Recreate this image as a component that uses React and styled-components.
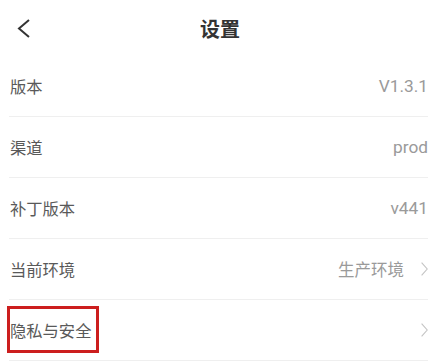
import React from "react";
import styled, { createGlobalStyle } from "styled-components";

const Global = createGlobalStyle`
  html, body { margin: 0; padding: 0; background: #fff; }
  body { font-family: Roboto, "Noto Sans CJK SC", "Noto Sans", sans-serif; }
`;

const Page = styled.div`
  width: 443px;
  background: #fff;
`;

const Header = styled.div`
  height: 56px;
  display: grid;
  grid-template-columns: 56px 1fr 56px;
  align-items: center;
`;

const BackButton = styled.div`
  display: flex;
  align-items: center;
  padding-left: 17px;
`;

const Title = styled.div`
  text-align: center;
  font-size: 20px;
  font-weight: 700;
  color: #333;
  font-family: "Noto Sans CJK SC", sans-serif;
  padding-right: 3px;
`;

const List = styled.div`
  padding: 0 15px 0 9px;
`;

const Row = styled.div`
  position: relative;
  height: 60px;
  border-bottom: 1px solid #efefef;
  display: flex;
  align-items: center;
  justify-content: space-between;
  padding-left: 1px;
`;

const Label = styled.span`
  font-size: 16.3px;
  color: #595959;
  font-family: "Noto Sans CJK SC", sans-serif;
`;

const Right = styled.div`
  display: flex;
  align-items: center;
  gap: 17px;
`;

const Value = styled.span`
  font-size: ${(p) => (p.$cjk ? "16.5px" : "17.3px")};
  color: #9a9a9a;
  font-family: ${(p) => (p.$cjk ? `"Noto Sans CJK SC", sans-serif` : `Roboto, sans-serif`)};
`;

const Highlight = styled.div`
  position: absolute;
  left: -2px;
  top: 6px;
  width: 86px;
  height: 41px;
  border: 3px solid #cc1e1e;
  pointer-events: none;
`;

const Chevron = ({ color = "#c4c4c4", w = 7, h = 14, sw = 1.1 }) => (
  <svg width={w} height={h} viewBox={`0 0 ${w} ${h}`} fill="none">
    <path d={`M0.6 0.6 L${w - 0.8} ${h / 2} L0.6 ${h - 0.6}`} stroke={color} strokeWidth={sw} />
  </svg>
);

const BackIcon = () => (
  <svg width="13" height="19" viewBox="0 0 13 19" fill="none">
    <path d="M12 1 L2 9.5 L12 18" stroke="#333" strokeWidth="2" strokeLinejoin="miter" />
  </svg>
);

const rows = [
  { label: "版本", value: "V1.3.1" },
  { label: "渠道", value: "prod" },
  { label: "补丁版本", value: "v441" },
  { label: "当前环境", value: "生产环境", cjk: true, arrow: true },
  { label: "隐私与安全", arrow: true, highlight: true },
];

export default function App() {
  return (
    <Page>
      <Global />
      <Header>
        <BackButton>
          <BackIcon />
        </BackButton>
        <Title>设置</Title>
        <div />
      </Header>
      <List>
        {rows.map((r) => (
          <Row key={r.label}>
            <Label>{r.label}</Label>
            <Right>
              {r.value && <Value $cjk={r.cjk}>{r.value}</Value>}
              {r.arrow && <Chevron />}
            </Right>
            {r.highlight && <Highlight />}
          </Row>
        ))}
      </List>
    </Page>
  );
}
